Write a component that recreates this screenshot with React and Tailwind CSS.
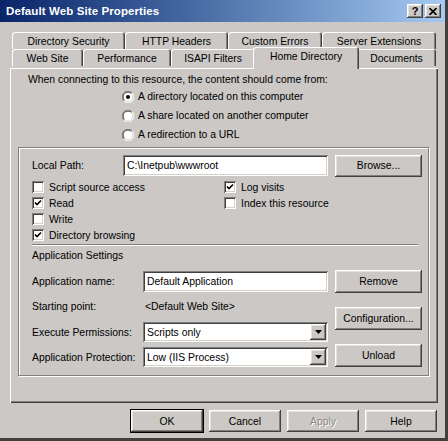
import React from 'react';

const raised = 'shadow-[inset_-1px_-1px_0_#404040,inset_1px_1px_0_#ffffff,inset_-2px_-2px_0_#808080,inset_2px_2px_0_#e4e2de]';
const sunken = 'shadow-[inset_1px_1px_0_#808080,inset_-1px_-1px_0_#ffffff,inset_2px_2px_0_#404040,inset_-2px_-2px_0_#d4d0c8]';

const backTabs = [
  { label: 'Directory Security', w: 'w-[113px]' },
  { label: 'HTTP Headers', w: 'w-[103px]' },
  { label: 'Custom Errors', w: 'w-[94px]' },
  { label: 'Server Extensions', w: 'w-[114px]' },
];

const frontTabs = [
  { label: 'Web Site', w: 'w-[71px]' },
  { label: 'Performance', w: 'w-[88px]' },
  { label: 'ISAPI Filters', w: 'w-[84px]' },
  { label: 'Home Directory', w: 'w-[102px]', active: true },
  { label: 'Documents', w: 'w-[79px]' },
];

const Tab = ({ label, w, active }) => (
  <div
    className={
      active
        ? `${w} relative z-10 -mx-[2px] -mt-[2px] -mb-[1px] h-[20px] box-content px-[2px] rounded-t-[3px] bg-[#cbc8c5] flex justify-center pt-[2px] shadow-[inset_1px_1px_0_#ffffff,inset_-1px_0_0_#404040,inset_-2px_0_0_#808080]`
        : `${w} h-[17px] rounded-t-[3px] flex items-center justify-center shadow-[inset_1px_1px_0_#ffffff,inset_-1px_0_0_#404040,inset_-2px_0_0_#808080]`
    }
  >
    <span className="mt-[1px]">{label}</span>
  </div>
);

const Button = ({ children, className = '', disabled, isDefault }) => (
  <div
    className={`flex items-center justify-center bg-[#cbc8c5] ${raised} ${
      isDefault ? 'outline outline-1 outline-black' : ''
    } ${className}`}
  >
    <span className={disabled ? 'text-[#8a8886] [text-shadow:1px_1px_0_#ffffff]' : ''}>{children}</span>
  </div>
);

const Radio = ({ checked }) => (
  <svg width="12" height="12" viewBox="0 0 12 12" className="shrink-0">
    <circle cx="6" cy="6" r="5.5" fill="#ffffff" />
    <path d="M10.2 1.8 A5.5 5.5 0 0 0 1.8 10.2" fill="none" stroke="#808080" strokeWidth="1" />
    <path d="M9.5 2.5 A4.5 4.5 0 0 0 2.5 9.5" fill="none" stroke="#404040" strokeWidth="1" />
    <path d="M1.8 10.2 A5.5 5.5 0 0 0 10.2 1.8" fill="none" stroke="#ffffff" strokeWidth="1" />
    <path d="M2.5 9.5 A4.5 4.5 0 0 0 9.5 2.5" fill="none" stroke="#d4d0c8" strokeWidth="1" />
    {checked && <circle cx="6" cy="6" r="2" fill="#000000" />}
  </svg>
);

const Check = ({ checked }) => (
  <div className={`w-[12px] h-[12px] shrink-0 bg-white ${sunken} flex items-center justify-center`}>
    {checked && (
      <svg width="8" height="8" viewBox="0 0 8 8">
        <path d="M1 3.5 L3 5.5 L7 1.5" fill="none" stroke="#000" strokeWidth="1.6" />
      </svg>
    )}
  </div>
);

const CheckRow = ({ checked, label }) => (
  <div className="h-[16px] flex items-center gap-[5px]">
    <Check checked={checked} />
    <span>{label}</span>
  </div>
);

const Field = ({ children, className = '' }) => (
  <div className={`bg-white ${sunken} flex items-center pl-[4px] ${className}`}>
    <span className="whitespace-nowrap">{children}</span>
  </div>
);

const Select = ({ children }) => (
  <div className={`w-[185px] h-[20px] bg-white ${sunken} flex items-center p-[2px]`}>
    <span className="flex-1 pl-[2px] whitespace-nowrap">{children}</span>
    <div className={`w-[16px] h-[16px] bg-[#cbc8c5] ${raised} flex items-center justify-center`}>
      <svg width="7" height="4" viewBox="0 0 7 4">
        <path d="M0 0 H7 L3.5 4 Z" fill="#000" />
      </svg>
    </div>
  </div>
);

export default function App() {
  return (
    <div className="w-[448px] h-[441px] overflow-hidden bg-[#cbc8c5] text-black text-[10.4px] leading-[13px] font-['Liberation_Sans',Arial,sans-serif] flex flex-col border-r-[3px] border-b-[3px] border-r-[#404040] border-b-[#404040] select-none">
      {/* title bar */}
      <div className="h-[22px] bg-linear-to-r from-[#0a246a] to-[#a6caf0] flex items-center pl-[6px] pr-[4px]">
        <span className="flex-1 text-white font-bold text-[11.5px] tracking-[0.1px]">Default Web Site Properties</span>
        <div className="flex items-center gap-[2px]">
          <div className={`w-[16px] h-[14px] bg-[#cbc8c5] ${raised} flex items-center justify-center font-bold text-[11px] leading-none`}>?</div>
          <div className={`w-[16px] h-[14px] bg-[#cbc8c5] ${raised} flex items-center justify-center`}>
            <svg width="8" height="7" viewBox="0 0 8 7">
              <path d="M0.5 0 L7.5 7 M7.5 0 L0.5 7" stroke="#000" strokeWidth="1.6" />
            </svg>
          </div>
        </div>
      </div>

      {/* tabs */}
      <div className="pl-[12px] pt-[10px] flex flex-col">
        <div className="flex">
          {backTabs.map((t) => (
            <Tab key={t.label} {...t} />
          ))}
        </div>
        <div className="flex">
          {frontTabs.map((t) => (
            <Tab key={t.label} {...t} />
          ))}
        </div>
      </div>

      {/* panel */}
      <div className="ml-[10px] w-[428px] h-[335px] shrink-0 flex flex-col shadow-[inset_1px_1px_0_#ffffff,inset_-1px_-1px_0_#404040,inset_-2px_-2px_0_#808080]">
        <div className="pl-[18px] pt-[5px]">When connecting to this resource, the content should come from:</div>
        <div className="pl-[112px] pt-[1px] flex flex-col">
          <div className="h-[19px] flex items-center gap-[4px]"><Radio checked /><span>A directory located on this computer</span></div>
          <div className="h-[19px] flex items-center gap-[4px]"><Radio /><span>A share located on another computer</span></div>
          <div className="h-[19px] flex items-center gap-[4px]"><Radio /><span>A redirection to a URL</span></div>
        </div>

        {/* frame */}
        <div className="ml-[8px] mt-[3px] w-[411px] h-[229px] border border-[#808080] shadow-[inset_1px_1px_0_#ffffff,1px_1px_0_#ffffff] flex flex-col pl-[13px]">
          <div className="mt-[6px] flex items-center h-[23px]">
            <span className="w-[91px]">Local Path:</span>
            <Field className="w-[205px] h-[21px]">C:\Inetpub\wwwroot</Field>
            <Button className="ml-[7px] w-[87px] h-[22px]">Browse...</Button>
          </div>

          <div className="mt-[2px] flex">
            <div className="w-[192px] flex flex-col">
              <CheckRow label="Script source access" />
              <CheckRow checked label="Read" />
              <CheckRow label="Write" />
              <CheckRow checked label="Directory browsing" />
            </div>
            <div className="flex flex-col">
              <CheckRow checked label="Log visits" />
              <CheckRow label="Index this resource" />
            </div>
          </div>

          <div className="mt-[1px] mr-[10px] h-[2px] border-t border-t-[#808080] border-b border-b-white" />

          <div className="mt-[3px]">Application Settings</div>

          <div className="mt-[9px] flex">
            <div className="w-[296px] flex flex-col">
              <div className="h-[21px] flex items-center">
                <span className="w-[111px]">Application name:</span>
                <Field className="w-[185px] h-[21px]">Default Application</Field>
              </div>
              <div className="mt-[4px] h-[21px] flex items-center">
                <span className="w-[113px]">Starting point:</span>
                <span>&lt;Default Web Site&gt;</span>
              </div>
              <div className="mt-[5px] h-[20px] flex items-center">
                <span className="w-[111px]">Execute Permissions:</span>
                <Select>Scripts only</Select>
              </div>
              <div className="mt-[5px] h-[20px] flex items-center">
                <span className="w-[111px]">Application Protection:</span>
                <Select>Low (IIS Process)</Select>
              </div>
            </div>
            <div className="ml-[7px] flex flex-col">
              <Button className="-mt-[1px] w-[87px] h-[23px]">Remove</Button>
              <Button className="mt-[14px] w-[87px] h-[23px]">Configuration...</Button>
              <Button className="mt-[14px] w-[87px] h-[23px]">Unload</Button>
            </div>
          </div>
        </div>
      </div>

      {/* bottom buttons */}
      <div className="mt-[7px] pl-[131px] flex gap-[6px]">
        <Button isDefault className="w-[72px] h-[22px]">OK</Button>
        <Button className="w-[72px] h-[22px]">Cancel</Button>
        <Button disabled className="w-[72px] h-[22px]">Apply</Button>
        <Button className="w-[72px] h-[22px]">Help</Button>
      </div>
    </div>
  );
}
